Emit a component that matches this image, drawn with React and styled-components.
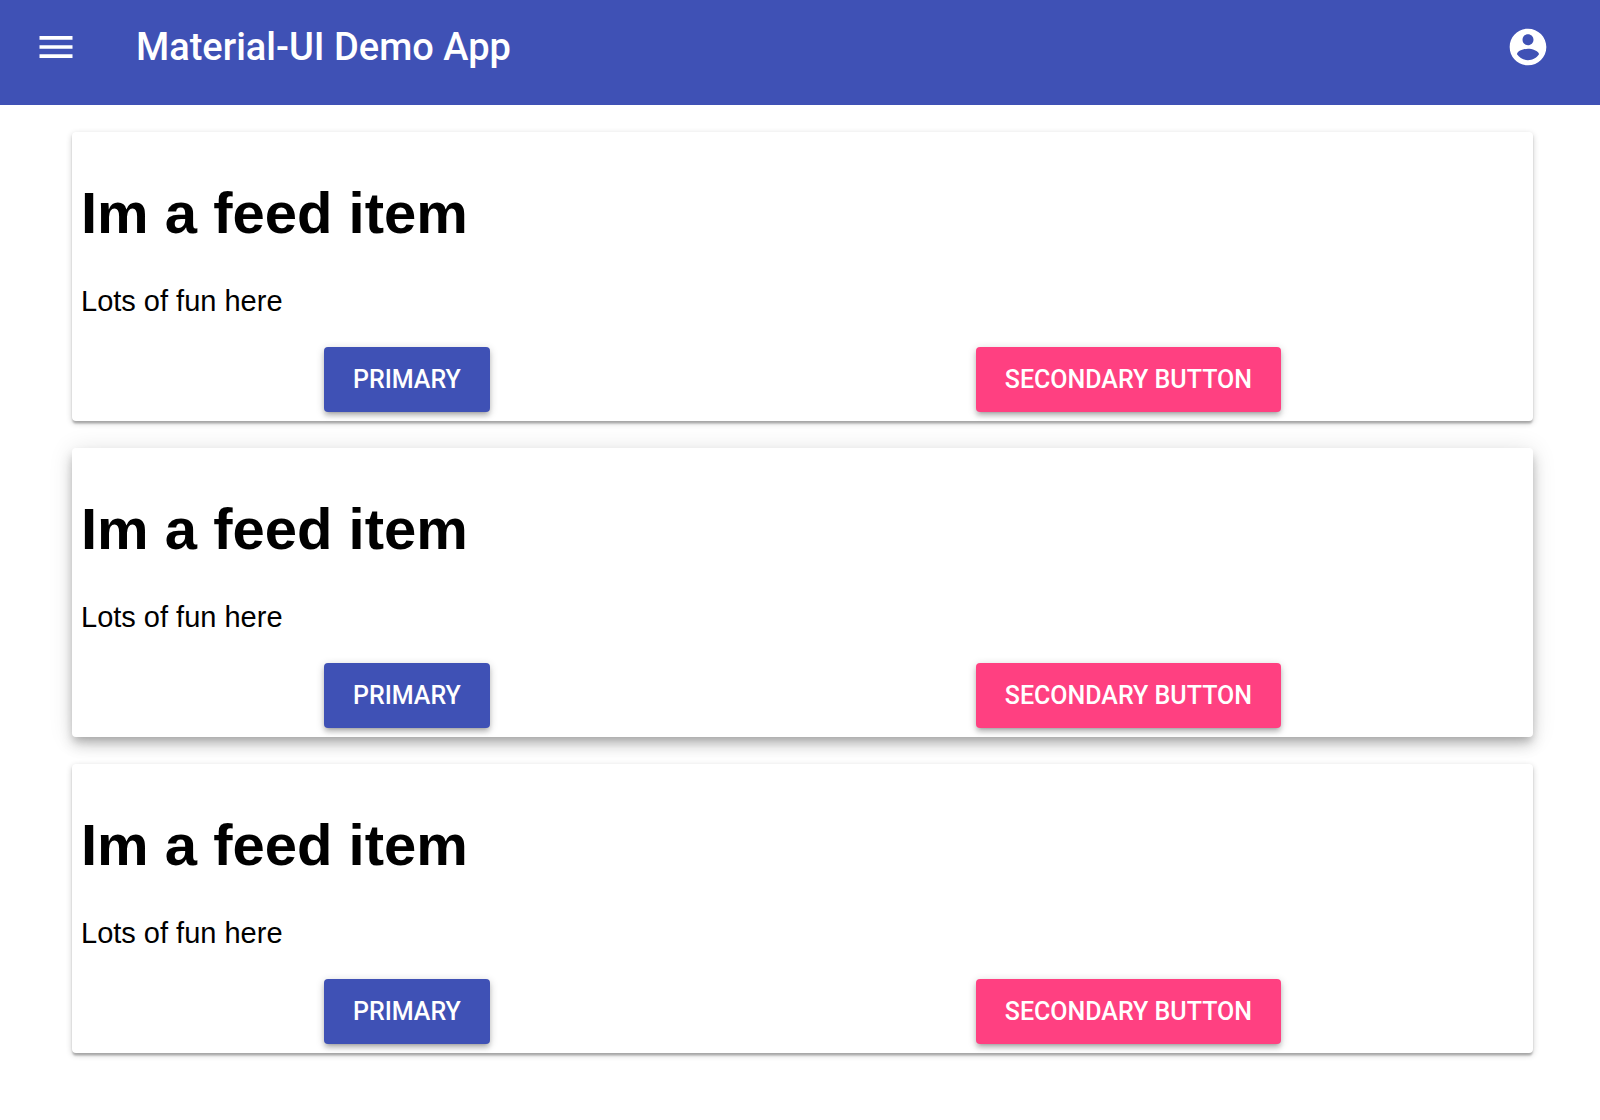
import React from "react";
import styled, { createGlobalStyle } from "styled-components";

const GlobalStyle = createGlobalStyle`
  body {
    margin: 0;
    background: #fff;
    color: #000;
    font-family: "Liberation Sans", Arial, sans-serif;
    font-size: 29px;
  }
`;

const AppBar = styled.header`
  display: flex;
  align-items: center;
  gap: 58px;
  box-sizing: border-box;
  height: 105px;
  padding: 0 50px 11px 34px;
  background: #3f51b5;
  color: #fff;
`;

const Title = styled.div`
  flex: 1;
  font: 500 38px/44px Roboto, sans-serif;
`;

const IconButton = styled.button`
  display: flex;
  padding: 0;
  border: 0;
  background: none;
  color: inherit;
  cursor: pointer;
`;

const Icon = styled.svg`
  width: 44px;
  height: 44px;
  fill: currentColor;
`;

const Feed = styled.main`
  display: flex;
  flex-direction: column;
  gap: 27px;
  padding: 27px 67px 27px 72px;
`;

const shadows = {
  low: `0 2px 6px rgba(0, 0, 0, 0.2), 0 2px 2px rgba(0, 0, 0, 0.14),
    0 4px 2px -1px rgba(0, 0, 0, 0.12)`,
  button: `0 2px 9px rgba(0, 0, 0, 0.2), 0 4px 4px rgba(0, 0, 0, 0.14),
    0 5px 2px -4px rgba(0, 0, 0, 0.12)`,
  high: `0 5px 9px -2px rgba(0, 0, 0, 0.2), 0 9px 14px rgba(0, 0, 0, 0.14),
    0 2px 25px rgba(0, 0, 0, 0.12)`,
};

const Card = styled.article`
  padding: 9px;
  border-radius: 4px;
  background: #fff;
  box-shadow: ${({ $raised }) => ($raised ? shadows.high : shadows.low)};
`;

const Heading = styled.h1`
  margin: 39px 0;
  font-size: 58px;
  line-height: 66px;
`;

const Text = styled.p`
  margin: 0 0 29px;
  line-height: 33px;
`;

const Actions = styled.div`
  display: flex;
  flex-wrap: wrap;
  justify-content: space-around;
`;

const Button = styled.button`
  padding: 11px 29px;
  border: 0;
  border-radius: 4px;
  background: ${({ $secondary }) => ($secondary ? "#ff4081" : "#3f51b5")};
  color: #fff;
  font: 500 25px/43px Roboto, sans-serif;
  text-transform: uppercase;
  box-shadow: ${shadows.button};
  cursor: pointer;
`;

function FeedItem({ raised }) {
  return (
    <Card $raised={raised}>
      <Heading>Im a feed item</Heading>
      <Text>Lots of fun here</Text>
      <Actions>
        <Button type="button">Primary</Button>
        <Button type="button" $secondary>Secondary Button</Button>
      </Actions>
    </Card>
  );
}

export default function App() {
  return (
    <>
      <GlobalStyle />
      <AppBar>
        <IconButton type="button" aria-label="Menu">
          <Icon viewBox="0 0 24 24" aria-hidden="true">
            <path d="M3 18h18v-2H3v2zm0-5h18v-2H3v2zm0-7v2h18V6H3z" />
          </Icon>
        </IconButton>
        <Title>Material-UI Demo App</Title>
        <IconButton type="button" aria-label="Account">
          <Icon viewBox="0 0 24 24" aria-hidden="true">
            <path d="M12 2C6.48 2 2 6.48 2 12s4.48 10 10 10 10-4.48 10-10S17.52 2 12 2zm0 3c1.66 0 3 1.34 3 3s-1.34 3-3 3-3-1.34-3-3 1.34-3 3-3zm0 14.2c-2.5 0-4.71-1.28-6-3.22.03-1.99 4-3.08 6-3.08 1.99 0 5.97 1.09 6 3.08-1.29 1.94-3.5 3.22-6 3.22z" />
          </Icon>
        </IconButton>
      </AppBar>
      <Feed>
        <FeedItem />
        <FeedItem raised />
        <FeedItem />
      </Feed>
    </>
  );
}
